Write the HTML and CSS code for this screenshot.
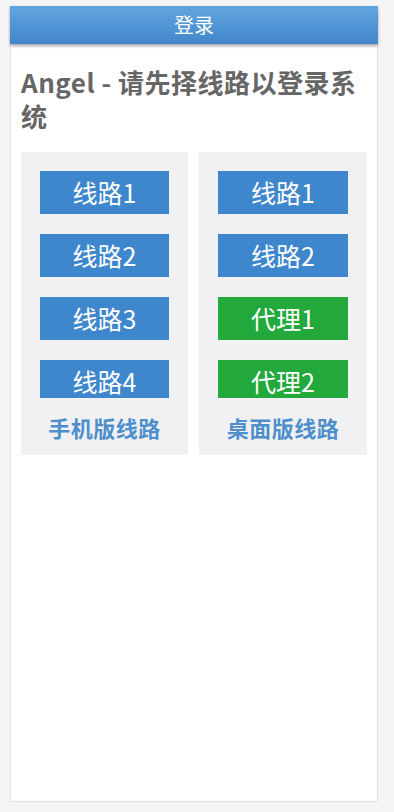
FILE: index.html
```html
<!DOCTYPE html>
<html lang="zh-CN">
<head>
    <meta charset="UTF-8">
    <meta name="viewport" content="width=device-width, initial-scale=1.0">
    <title>登录</title>
    <link rel="stylesheet" href="styles.css">
</head>
<body>
    <div class="page">
        <header class="topbar">登录</header>

        <div class="card">
            <h1 class="title">Angel - 请先择线路以登录系统</h1>

            <div class="lines">
                <div class="line-group">
                    <div class="line-list">
                        <a class="line-btn" href="#">线路1</a>
                        <a class="line-btn" href="#">线路2</a>
                        <a class="line-btn" href="#">线路3</a>
                        <a class="line-btn" href="#">线路4</a>
                    </div>
                    <div class="group-label">手机版线路</div>
                </div>

                <div class="line-group">
                    <div class="line-list">
                        <a class="line-btn" href="#">线路1</a>
                        <a class="line-btn" href="#">线路2</a>
                        <a class="line-btn proxy" href="#">代理1</a>
                        <a class="line-btn proxy" href="#">代理2</a>
                    </div>
                    <div class="group-label">桌面版线路</div>
                </div>
            </div>
        </div>
    </div>
</body>
</html>
```

FILE: styles.css
```css
:root {
    --blue: #3f87cd;
    --green: #22a83b;
    --label-blue: #4e8fcb;
    --panel-gray: #f1f1f3;
    --text-gray: #666666;
}

* {
    margin: 0;
    padding: 0;
    box-sizing: border-box;
    font-family: "Noto Sans CJK SC", "Noto Sans", sans-serif;
}

body {
    background-color: #f5f5f7;
}

.page {
    width: 368px;
    margin: 6px 0 10px 10px;
}

.topbar {
    height: 38px;
    line-height: 38px;
    text-align: center;
    color: #ffffff;
    font-size: 20px;
    background: linear-gradient(to bottom, #60a6de, #4286cb);
    box-shadow: 0 2px 3px rgba(0, 0, 0, 0.35);
    position: relative;
}

.card {
    background: #ffffff;
    border: 1px solid #e2e2e4;
    border-top: none;
    min-height: 758px;
    padding: 21px 10px 0 10px;
}

.title {
    font-size: 26px;
    font-weight: bold;
    line-height: 34px;
    color: var(--text-gray);
    letter-spacing: 0.5px;
    margin-bottom: 19px;
}

.lines {
    display: grid;
    grid-template-columns: 167px 168px;
    gap: 11px;
}

.line-group {
    background: var(--panel-gray);
    padding: 19px 19px 13px 19px;
}

.line-list {
    display: flex;
    flex-direction: column;
    gap: 20px;
}

.line-btn {
    display: block;
    height: 43px;
    line-height: 42px;
    text-align: center;
    color: #ffffff;
    font-size: 25px;
    text-decoration: none;
    background: var(--blue);
    overflow: hidden;
}

.line-btn:last-child {
    height: 38px;
}

.line-btn.proxy {
    background: var(--green);
}

.group-label {
    margin-top: 14px;
    line-height: 30px;
    text-align: center;
    font-size: 22px;
    font-weight: bold;
    letter-spacing: 0.5px;
    color: var(--label-blue);
}
```
